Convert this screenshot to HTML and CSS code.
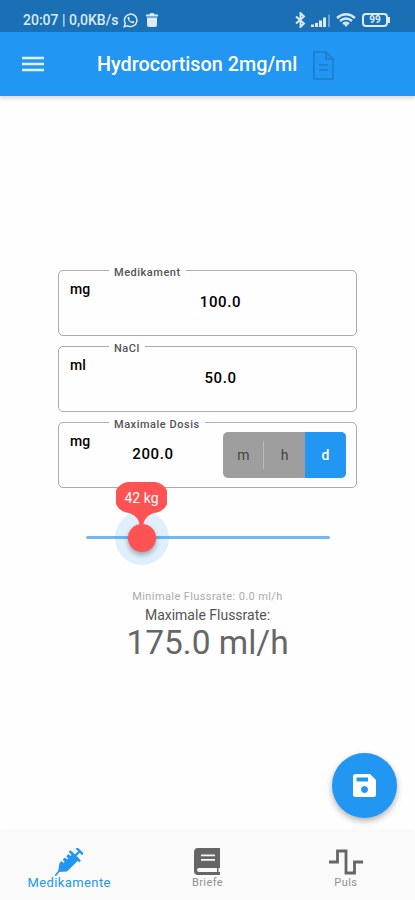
FILE: index.html
```html
<!DOCTYPE html>
<html lang="de">
<head>
    <meta charset="UTF-8">
    <meta name="viewport" content="width=device-width, initial-scale=1.0">
    <title>Hydrocortison 2mg/ml</title>
    <link rel="stylesheet" href="styles.css">
</head>
<body>
    <div class="status-bar">
        <span class="status-text">20:07 | 0,0KB/s</span>
        <svg class="icon-whatsapp" width="15" height="15" viewBox="0 0 24 24">
            <path d="M2 22l1.500-5.500A10 10 0 1 1 7.500 20.500z" fill="none" stroke="currentColor" stroke-width="2.400"/>
            <path d="M8 6.500c-3 3 5 12 9.500 9.500l.5-2-3-1.500-1.500 1.500c-1.500-.5-3-2-3.500-3.500l1-1.500L9.500 6z" fill="currentColor"/>
        </svg>
        <svg class="icon-trash" width="12" height="14" viewBox="0 0 12 14">
            <path d="M0 1.500h3.500L4.500 0h3l1 1.500H12v2H0zM1 4.500h10V12q0 2-2 2H3q-2 0-2-2z" fill="currentColor"/>
        </svg>
        <div class="status-icons">
            <svg width="11" height="16" viewBox="0 0 11 16">
                <path d="M1 4.500l8 7L5.500 15V1L9 4.500l-8 7" fill="none" stroke="currentColor" stroke-width="1.900"/>
            </svg>
            <svg width="20" height="13" viewBox="0 0 20 13">
                <path d="M0 10.500h3V13H0zM4 9h3v4H4zM8 6.500h3V13H8zM12 3.500h3V13h-3z" fill="currentColor"/>
                <path d="M17 0.500h2V13h-2z" fill="currentColor" opacity="0.4"/>
            </svg>
            <svg width="20" height="14" viewBox="0 0 20 14">
                <path d="M1 5Q10-2.500 19 5M4 8q6-5 12 0M7 10.800q3-2.400 6 0" fill="none" stroke="currentColor" stroke-width="2.300"/>
                <path d="M8 11.500q2-1.500 4 0L10 14z" fill="currentColor"/>
            </svg>
            <div class="battery">99</div>
        </div>
    </div>

    <div class="app-bar">
        <svg class="menu" width="22" height="16" viewBox="0 0 22 16">
            <path d="M0 2h22M0 8h22M0 14h22" stroke="currentColor" stroke-width="2.600"/>
        </svg>
        <h1>Hydrocortison 2mg/ml</h1>
        <svg class="document" width="21" height="29" viewBox="0 0 21 29">
            <path d="M1 1h12l7 7v20H1zM13 1v7h7M6 14h9M6 19h9" fill="none" stroke="currentColor" stroke-width="2"/>
        </svg>
    </div>

    <div class="content">
        <div class="field">
            <span class="field-label">Medikament</span>
            <span class="unit">mg</span>
            <span class="value">100.0</span>
        </div>
        <div class="field">
            <span class="field-label">NaCl</span>
            <span class="unit">ml</span>
            <span class="value">50.0</span>
        </div>
        <div class="field">
            <span class="field-label">Maximale Dosis</span>
            <span class="unit">mg</span>
            <span class="value value-dose">200.0</span>
            <div class="toggle">
                <span>m</span>
                <span>h</span>
                <span class="selected">d</span>
            </div>
        </div>

        <div class="slider">
            <div class="thumb"></div>
            <div class="bubble">
                <svg width="51" height="44" viewBox="0 0 52 44" preserveAspectRatio="none">
                    <path d="M16 0h20a15.500 15.500 0 0 1 4 30.800C33 32.500 29 36 27.500 44h-3C23 36 19 32.500 12 30.800A15.500 15.500 0 0 1 16 0z" fill="#ff5252"/>
                </svg>
                <span>42 kg</span>
            </div>
        </div>

        <div class="results">
            <div class="min-rate">Minimale Flussrate: 0.0 ml/h</div>
            <div class="max-label">Maximale Flussrate:</div>
            <div class="max-rate">175.0 ml/h</div>
        </div>
    </div>

    <div class="save-button">
        <svg width="23" height="23" viewBox="0 0 23 23">
            <path d="M2.500 0H17l6 6v14.500q0 2.500-2.500 2.500h-18Q0 23 0 20.500v-18Q0 0 2.500 0zM3.500 3.500v4H15v-4zM11.500 12a3.500 3.500 0 1 0 .01 0z" fill="#fff" fill-rule="evenodd"/>
        </svg>
    </div>

    <div class="bottom-nav">
        <div class="nav-item active">
            <svg width="28" height="28" viewBox="0 0 28 28">
                <path d="M0 28l4-5" stroke="currentColor" stroke-width="1.600"/>
                <path d="M3 24l1.500-9 2-2 2 2 1.200-1.200-2-2 2.300-2.300 2 2 1.200-1.200-2-2L13.500 6l2 2 1.200-1.200-1.500-1.500L17 3.500l7.500 7.500L12 23.500z" fill="currentColor"/>
                <path d="M14.500 3l10.500 10.500M20 8l5-5M21.500 0L28 6.500" fill="none" stroke="currentColor" stroke-width="2.400"/>
            </svg>
            <span>Medikamente</span>
        </div>
        <div class="nav-item">
            <svg width="26" height="27" viewBox="0 0 26 27">
                <path d="M4 0h22v20h-1.500v4H26v3H4q-4 0-4-4V4q0-4 4-4zM7 6.500v1.800h14V6.500zM7 11v1.800h14V11zM5 20q-2 0-2 2t2 2h18v-4z" fill="currentColor" fill-rule="evenodd"/>
            </svg>
            <span>Briefe</span>
        </div>
        <div class="nav-item">
            <svg width="34" height="26" viewBox="0 0 34 26">
                <path d="M0 13h8.500V2h8.500v22h8.500V13H34" fill="none" stroke="currentColor" stroke-width="2.800"/>
            </svg>
            <span>Puls</span>
        </div>
    </div>
</body>
</html>
```
FILE: styles.css
```css
* {
    box-sizing: border-box;
}

body {
    font-family: Roboto, "Liberation Sans", sans-serif;
    background-color: #fefefe;
    display: flex;
    flex-direction: column;
    height: 900px;
    margin: 0;
    overflow: hidden;
    position: relative;
}

svg {
    display: block;
    flex-shrink: 0;
}

.status-bar {
    height: 32px;
    background-color: #1a6fb5;
    color: #dceaf6;
    display: flex;
    align-items: center;
    padding: 8px 27px 0 23px;
}

.status-text {
    width: 97px;
    font-size: 14px;
    font-weight: 500;
    white-space: nowrap;
}

.icon-whatsapp {
    margin-left: 3px;
}

.icon-trash {
    margin-left: 8px;
}

.status-icons {
    margin-left: auto;
    display: flex;
    align-items: center;
    gap: 5px;
}

.battery {
    width: 26px;
    height: 14px;
    border: 2px solid #dceaf6;
    border-radius: 4px;
    font-size: 10px;
    font-weight: 700;
    line-height: 10px;
    text-align: center;
    margin-left: 1px;
    position: relative;
}

.battery::after {
    content: "";
    position: absolute;
    right: -4px;
    top: 2px;
    width: 2px;
    height: 6px;
    background-color: #dceaf6;
}

.app-bar {
    height: 64px;
    background-color: #2196f3;
    color: #fff;
    display: flex;
    align-items: center;
    padding-left: 22px;
    box-shadow: 0 3px 3px rgba(0, 0, 0, 0.12);
}

.menu {
    color: #e3f2fe;
}

h1 {
    width: 202px;
    margin: 0 0 0 53px;
    font-size: 19.8px;
    font-weight: 500;
    white-space: nowrap;
}

.document {
    color: #1d82d3;
    margin: 2px 0 0 14px;
}

.content {
    flex: 1;
    display: flex;
    flex-direction: column;
    padding: 174px 58px 0;
}

.field {
    height: 66px;
    margin-bottom: 10px;
    border: 1px solid #aaa;
    border-radius: 5px;
    display: flex;
    position: relative;
}

.field-label {
    position: absolute;
    left: 50px;
    top: -5px;
    padding: 0 5px;
    background-color: #fefefe;
    color: #555;
    font-size: 11px;
    line-height: 14px;
    font-weight: 500;
    letter-spacing: 0.52px;
}

.unit {
    width: 44px;
    padding: 9px 0 0 11px;
    font-size: 14px;
    line-height: 18px;
    font-weight: 500;
    letter-spacing: 0.1px;
}

.value {
    width: 235px;
    padding-top: 22px;
    font-size: 15px;
    line-height: 18px;
    font-weight: 500;
    letter-spacing: 0.6px;
    text-align: center;
}

.value-dose {
    width: 100px;
}

.toggle {
    margin: 9px 10px 9px auto;
    width: 123px;
    display: flex;
    border-radius: 5px;
    overflow: hidden;
    background-color: #9e9e9e;
    color: #444;
    font-size: 14px;
}

.toggle span {
    flex: 1;
    display: flex;
    align-items: center;
    justify-content: center;
    position: relative;
}

.toggle span:first-child::after {
    content: "";
    position: absolute;
    right: 0;
    top: 9px;
    width: 1px;
    height: 28px;
    background-color: #bbb;
}

.toggle .selected {
    background-color: #2196f3;
    color: #fff;
    font-weight: 500;
}

.slider {
    height: 3px;
    margin: 38px 27px 0 28px;
    background-color: #74b8f3;
    border-radius: 2px;
    position: relative;
}

.thumb {
    position: absolute;
    left: 42px;
    top: -12px;
    width: 28px;
    height: 28px;
    border-radius: 50%;
    background-color: #ff5252;
    box-shadow: 0 3px 5px rgba(0, 0, 0, 0.3), 0 0 0 13px rgba(33, 150, 243, 0.14);
}

.bubble {
    position: absolute;
    left: 30px;
    top: -54px;
    color: #fff;
    font-size: 14px;
}

.bubble span {
    position: absolute;
    left: 0;
    top: 7px;
    width: 51px;
    line-height: 18px;
    text-align: center;
}

.results {
    margin-top: 51px;
    text-align: center;
    white-space: nowrap;
}

.min-rate {
    font-size: 11px;
    line-height: 14px;
    letter-spacing: 0.4px;
    color: #aaa;
}

.max-label {
    margin-top: 2px;
    font-size: 14px;
    line-height: 18px;
    letter-spacing: 0;
    color: #555;
}

.max-rate {
    font-size: 33.5px;
    line-height: 38px;
    color: #666;
}

.save-button {
    position: absolute;
    left: 332px;
    top: 753px;
    width: 65px;
    height: 65px;
    border-radius: 50%;
    background-color: #2196f3;
    box-shadow: 0 3px 6px rgba(0, 0, 0, 0.3);
    display: flex;
    align-items: center;
    justify-content: center;
}

.bottom-nav {
    height: 68px;
    background-color: #fafafa;
    box-shadow: 0 -1px 4px rgba(0, 0, 0, 0.04);
    display: flex;
}

.nav-item {
    flex: 1;
    display: flex;
    flex-direction: column;
    align-items: center;
    justify-content: flex-end;
    padding-bottom: 10px;
    color: #666;
    font-size: 11px;
    line-height: 14px;
}

.nav-item span {
    margin-top: 1px;
    color: #909090;
    letter-spacing: 0.4px;
}

.nav-item.active,
.nav-item.active span {
    color: #2196f3;
}

.nav-item.active span {
    margin-top: 0;
    font-size: 13px;
}
```
